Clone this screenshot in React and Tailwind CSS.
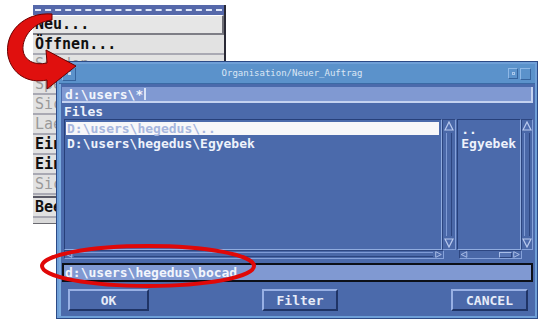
import React from "react";

const mono = "font-['DejaVu_Sans_Mono',monospace]";

function MenuRow({ label, disabled, raised }) {
  return (
    <div
      className={
        "h-[20px] flex items-center pl-[2px] border-b-2 " +
        (raised
          ? "bg-[#e6e6e6] border-b-[#7e7e86] border-r-2 border-r-[#6e6e76] border-t border-t-white"
          : "bg-[#e2e2e2] border-b-[#a9a9b3]")
      }
    >
      <span
        className={
          mono +
          " text-[15px] leading-none font-bold " +
          (disabled ? "text-[#9a9a9a] font-normal" : "text-[#101010]")
        }
      >
        {label}
      </span>
    </div>
  );
}

function Menu() {
  return (
    <div className="absolute left-[33px] top-[5px] w-[193px] h-[219px] bg-[#d9d9d9] border-r-2 border-r-[#2a2a36] border-b border-b-[#6a6a70] flex flex-col">
      <div className="h-[10px] bg-[#5568aa] flex items-center px-[2px]">
        <div className="w-full border-t-2 border-dashed border-[#dfe6f7]" />
      </div>
      <MenuRow label="Neu..." raised />
      <MenuRow label="Öffnen..." />
      <MenuRow label="Senden..." disabled />
      <MenuRow label="Speichern als..." disabled />
      <MenuRow label="Sichern" disabled />
      <MenuRow label="Laenge" disabled />
      <MenuRow label="Einfügen" />
      <MenuRow label="Einstellungen" />
      <MenuRow label="Sichern unter" disabled />
      <div className="h-[3px] bg-[#d9d9d9] border-b-2 border-[#5a5a66]" />
      <MenuRow label="Beenden" />
    </div>
  );
}

function Tri({ dir, className }) {
  const pts = {
    up: "1,9 5,1 9,9",
    down: "1,1 5,9 9,1",
    left: "9,1 1,5 9,9",
    right: "1,1 9,5 1,9",
  }[dir];
  return (
    <svg width="10" height="10" viewBox="0 0 10 10" className={className}>
      <polygon points={pts} fill="#4e6cae" stroke="#b9c9ee" strokeWidth="1.2" />
    </svg>
  );
}

function VScroll({ w }) {
  return (
    <div
      className={
        w +
        " h-full bg-[#4a68a8] border border-t-[#2d4681] border-l-[#2d4681] border-r-[#86a2da] border-b-[#86a2da] flex flex-col items-center justify-between py-[1px]"
      }
    >
      <Tri dir="up" />
      <div className="flex-1 w-[6px] my-[2px] border-l border-[#7f9bd6] border-r border-r-[#2d4681]" />
      <Tri dir="down" />
    </div>
  );
}

function Button({ children, w }) {
  return (
    <div
      className={
        w +
        " h-[22px] bg-[#4b69aa] border-2 border-t-[#98b0e4] border-l-[#98b0e4] border-b-[#1f3466] border-r-[#1f3466] flex items-center justify-center"
      }
    >
      <span className={mono + " text-[13px] font-bold text-[#e6ecf8] leading-none"}>{children}</span>
    </div>
  );
}

function Dialog() {
  return (
    <div className="absolute left-[56px] top-[61px] w-[482px] h-[258px] bg-[#6f9fd7] border border-[#2c4a86] p-[2px] flex flex-col">
      {/* title bar */}
      <div className="h-[20px] bg-[#5b92cb] flex items-center border-b border-[#3b6aa5]">
        <div className="w-[14px] h-[14px] ml-[3px] border border-[#8fb8e6] border-r-[#36649e] border-b-[#36649e] flex items-center justify-center">
          <div className="w-[3px] h-[3px] bg-[#c9dcf2]" />
        </div>
        <div className={"flex-1 text-center text-[9px] text-[#dbe7f5] leading-none " + mono}>
          Organisation/Neuer_Auftrag
        </div>
        <div className="w-[10px] h-[11px] border border-[#8fb8e6] border-r-[#36649e] border-b-[#36649e] mr-[2px] flex items-center justify-center">
          <div className="w-[3px] h-[3px] border border-[#a9c7ea]" />
        </div>
        <div className="w-[11px] h-[12px] border border-[#8fb8e6] border-r-[#36649e] border-b-[#36649e] mr-[4px]" />
      </div>
      {/* body */}
      <div className="flex-1 bg-[#4b6aab] border-l-2 border-[#7baade] flex flex-col pl-[1px] pr-[2px] pt-[3px]">
        <div className="h-[16px] bg-[#8099d2] border-b-2 border-b-[#c4d2f0] border-r-2 border-r-[#c4d2f0] flex items-center pl-[3px]">
          <span className={mono + " text-[13px] font-bold text-[#f2f5fc] leading-none"}>d:\users\*</span>
          <div className="w-[2px] h-[12px] bg-[#d8e2f6] ml-[1px]" />
        </div>
        <div className="h-[16px] flex items-center pl-[2px]">
          <span className={mono + " text-[13px] font-bold text-[#eef2fb] leading-none"}>Files</span>
        </div>
        {/* lists */}
        <div className="h-[131px] flex pl-[2px]">
          <div className="w-[380px] h-full bg-[#4b6aab] border border-t-[#27407a] border-l-[#27407a] border-r-[#90acdf] border-b-[#90acdf] pt-[2px] pl-[1px] pr-[2px]">
            <div className="h-[13px] bg-[#f7f7f9] flex items-center pl-[1px]">
              <span className={mono + " text-[13px] font-bold text-[#a6b6de] leading-none"}>D:\users\hegedus\..</span>
            </div>
            <div className="h-[16px] flex items-center pl-[1px]">
              <span className={mono + " text-[13px] font-bold text-[#eef2fb] leading-none"}>D:\users\hegedus\Egyebek</span>
            </div>
          </div>
          <VScroll w="w-[14px]" />
          <div className="w-[1px]" />
          <div className="w-[64px] h-full bg-[#4b6aab] border border-t-[#27407a] border-l-[#27407a] border-r-[#90acdf] border-b-[#90acdf] pt-[3px] pl-[3px]">
            <div className={mono + " text-[13px] font-bold text-[#eef2fb] leading-[13px]"}>..</div>
            <div className={mono + " text-[13px] font-bold text-[#eef2fb] leading-[15px]"}>Egyebek</div>
          </div>
          <VScroll w="w-[12px]" />
        </div>
        {/* h scrollbars */}
        <div className="h-[9px] flex pl-[2px]">
          <div className="w-[380px] h-full bg-[#4a68a8] border border-t-[#2d4681] border-l-[#2d4681] border-r-[#86a2da] border-b-[#86a2da] flex items-center justify-between">
            <Tri dir="left" className="w-[8px] h-[7px]" />
            <div className="flex-1 h-[5px] mx-[1px] border-t border-[#7f9bd6] border-b border-b-[#2d4681]" />
            <Tri dir="right" className="w-[9px] h-[7px]" />
          </div>
          <div className="w-[15px]" />
          <div className="w-[63px] h-full bg-[#4a68a8] border border-t-[#2d4681] border-l-[#2d4681] border-r-[#86a2da] border-b-[#86a2da] flex items-center">
            <Tri dir="left" className="w-[8px] h-[7px]" />
            <div className="flex-1" />
            <div className="w-[13px] h-[6px] bg-[#5573b3] border border-[#a8bde8] border-r-[#2d4681] border-b-[#2d4681]" />
            <Tri dir="right" className="w-[9px] h-[7px]" />
          </div>
        </div>
        <div className="h-[4px]" />
        <div className="h-[19px] bg-[#8099d2] border-2 border-[#0c1018] flex items-center pl-[1px]">
          <span className={mono + " text-[13px] font-bold text-[#f2f5fc] leading-none"}>d:\users\hegedus\bocad</span>
        </div>
        <div className="flex justify-between pl-[6px] pr-[5px] pt-[7px]">
          <Button w="w-[81px]">OK</Button>
          <Button w="w-[76px]">Filter</Button>
          <Button w="w-[77px]">CANCEL</Button>
        </div>
      </div>
    </div>
  );
}

export default function App() {
  return (
    <div className="relative w-[541px] h-[323px] bg-white overflow-hidden">
      <Menu />
      <Dialog />
      {/* red curved arrow */}
      <svg className="absolute left-0 top-0" width="100" height="100" viewBox="0 0 100 100">
        <path
          d="M 52 14 C 24 12, 4 32, 8 56 C 12 74, 28 84, 47 80 L 47 89 L 76 66 L 46 50 L 47 63 C 34 66, 24 60, 23 50 C 22 36, 34 22, 52 20 Z"
          fill="#e0100e"
          stroke="#6a0000"
          strokeWidth="1"
        />
      </svg>
      {/* red ellipse */}
      <svg className="absolute left-0 top-0" width="541" height="323" viewBox="0 0 541 323">
        <ellipse cx="148" cy="266" rx="106" ry="20" fill="none" stroke="#e00808" strokeWidth="4" />
      </svg>
    </div>
  );
}
